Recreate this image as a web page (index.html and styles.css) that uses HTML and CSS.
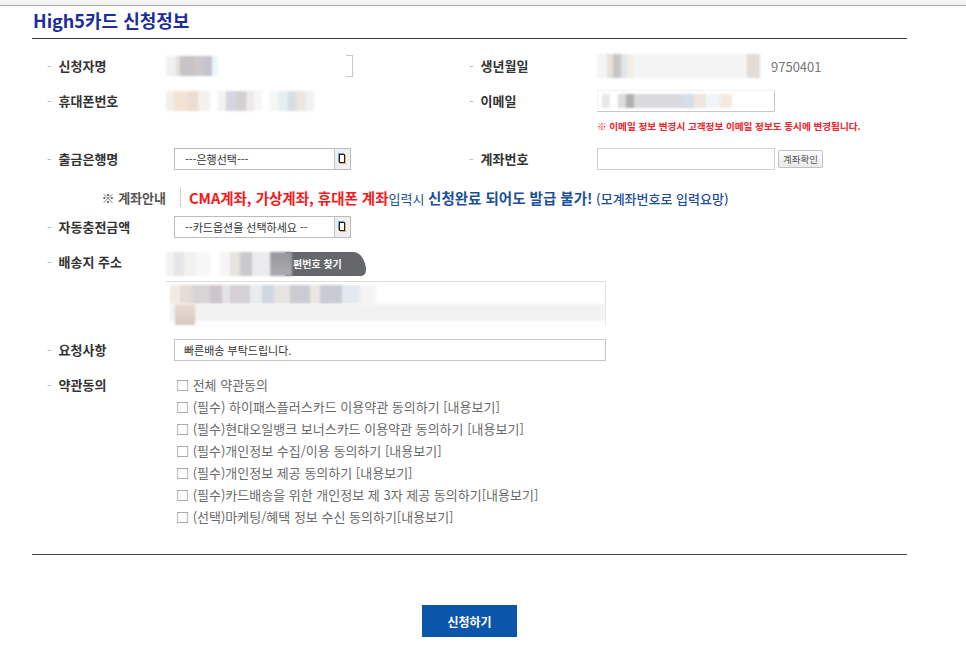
FILE: index.html
```html
<!DOCTYPE html>
<html lang="ko">
<head>
    <meta charset="UTF-8">
    <title>High5카드 신청정보</title>
    <link rel="stylesheet" href="styles.css">
</head>
<body>
    <div class="topbar"></div>
    <div class="wrap">
        <h1 class="title">High5카드 신청정보</h1>
        <div class="line"></div>

        <div class="row r1">
            <div class="cell">
                <span class="label">신청자명</span>
                <div class="field">
                    <span class="mosaic m-name"></span>
                    <span class="bracket"></span>
                </div>
            </div>
            <div class="cell right">
                <span class="label">생년월일</span>
                <div class="field">
                    <span class="mosaic m-birth"></span>
                    <span class="birth">9750401</span>
                </div>
            </div>
        </div>

        <div class="row r2">
            <div class="cell">
                <span class="label">휴대폰번호</span>
                <div class="field">
                    <span class="mosaic m-phone1"></span>
                    <span class="mosaic m-phone2"></span>
                    <span class="mosaic m-phone3"></span>
                </div>
            </div>
            <div class="cell right">
                <span class="label">이메일</span>
                <div class="field">
                    <div class="input email"><span class="mosaic m-email"></span></div>
                </div>
            </div>
        </div>

        <div class="row note-row">
            <div class="cell"></div>
            <div class="cell right">
                <span class="label"></span>
                <p class="note">※ 이메일 정보 변경시 고객정보 이메일 정보도 동시에 변경됩니다.</p>
            </div>
        </div>

        <div class="row r3">
            <div class="cell">
                <span class="label">출금은행명</span>
                <div class="field">
                    <div class="select">---은행선택---<span class="arrow"><i></i></span></div>
                </div>
            </div>
            <div class="cell right">
                <span class="label">계좌번호</span>
                <div class="field">
                    <div class="input account"></div>
                    <button class="btn-check">계좌확인</button>
                </div>
            </div>
        </div>

        <div class="row notice">
            <span class="notice-label">※ 계좌안내</span>
            <span class="sep"></span>
            <span class="notice-text"><b class="red">CMA계좌, 가상계좌, 휴대폰 계좌</b><span class="blue">입력시 </span><b class="blue big">신청완료 되어도 발급 불가!</b><span class="blue paren"> (모계좌번호로 입력요망)</span></span>
        </div>

        <div class="row r5">
            <div class="cell">
                <span class="label">자동충전금액</span>
                <div class="field">
                    <div class="select">--카드옵션을 선택하세요 --<span class="arrow"><i></i></span></div>
                </div>
            </div>
        </div>

        <div class="row r6">
            <div class="cell wide">
                <span class="label">배송지 주소</span>
                <div class="field column">
                    <div class="zip-line">
                        <span class="mosaic m-zip1"></span>
                        <span class="mosaic m-zip2"></span>
                        <span class="mosaic m-zip3"></span>
                        <button class="btn-zip">편번호 찾기</button>
                    </div>
                    <div class="addr-box">
                        <span class="mosaic m-addr1"></span>
                        <span class="addr-band"></span>
                        <span class="mosaic m-addr2"></span>
                    </div>
                </div>
            </div>
        </div>

        <div class="row r7">
            <div class="cell wide">
                <span class="label">요청사항</span>
                <div class="field">
                    <div class="input request">빠른배송 부탁드립니다.</div>
                </div>
            </div>
        </div>

        <div class="row r8">
            <div class="cell wide top">
                <span class="label">약관동의</span>
                <ul class="terms">
                    <li>□ 전체 약관동의</li>
                    <li>□ (필수) 하이패스플러스카드 이용약관 동의하기 [내용보기]</li>
                    <li>□ (필수)현대오일뱅크 보너스카드 이용약관 동의하기 [내용보기]</li>
                    <li>□ (필수)개인정보 수집/이용 동의하기 [내용보기]</li>
                    <li>□ (필수)개인정보 제공 동의하기 [내용보기]</li>
                    <li>□ (필수)카드배송을 위한 개인정보 제 3자 제공 동의하기[내용보기]</li>
                    <li>□ (선택)마케팅/혜택 정보 수신 동의하기[내용보기]</li>
                </ul>
            </div>
        </div>

        <div class="line bottom"></div>

        <div class="actions">
            <button class="btn-submit">신청하기</button>
        </div>
    </div>
</body>
</html>
```

FILE: styles.css
```css
body {
    margin: 0;
    padding: 0;
    background-color: #fff;
    font-family: "Noto Sans CJK KR", "Noto Sans", sans-serif;
    color: #333;
}

.topbar {
    height: 5px;
    background-color: #f4f4f4;
    border-bottom: 1px solid #a8a8a8;
}

.wrap {
    width: 875px;
    margin-left: 32px;
}

.title {
    margin: 0;
    padding: 2px 0 0 1px;
    height: 30px;
    font-size: 18px;
    line-height: 24px;
    font-weight: bold;
    color: #1c2d9a;
}

.line {
    height: 1px;
    background-color: #3a3a3a;
}

.line.bottom {
    margin-top: 26px;
    background-color: #444;
}

/* rows */
.row {
    display: flex;
    align-items: center;
}

.r1 { margin-top: 16px; height: 22px; }
.r2 { margin-top: 13px; height: 22px; }
.note-row { margin-top: 7px; height: 14px; }
.r3 { margin-top: 15px; height: 22px; }
.notice { margin-top: 17px; height: 20px; }
.r5 { margin-top: 9px; height: 22px; }
.r6 { margin-top: 13px; align-items: flex-start; }
.r7 { margin-top: 14px; height: 22px; }
.r8 { margin-top: 13px; align-items: flex-start; }

.cell {
    display: flex;
    align-items: center;
    width: 422px;
    height: 100%;
}

.cell.wide {
    width: 875px;
    align-items: flex-start;
}

.label {
    width: 119px;
    padding-left: 15px;
    font-size: 13px;
    font-weight: bold;
    line-height: 22px;
    color: #333;
    white-space: nowrap;
}

.label:not(:empty)::before {
    content: "-";
    color: #bbb;
    font-weight: normal;
    margin-right: 7px;
}

.right .label {
    width: 128px;
}

.field {
    display: flex;
    align-items: center;
    position: relative;
}

.field.column {
    flex-direction: column;
    align-items: flex-start;
}

/* blurred personal data */
.mosaic {
    display: block;
    filter: blur(1.2px);
}

.m-name {
    width: 52px;
    height: 20px;
    background: linear-gradient(90deg, #f2f0ef 0 10px, #e2dedc 10px 14px, #c6c4c6 14px 28px, #cbc7ca 28px 38px, #c3c4cd 38px 46px, #eef4fd 46px);
}

.bracket {
    display: block;
    width: 6px;
    height: 20px;
    margin-left: 128px;
    border: 1px solid #c8c8c8;
    border-left: none;
}

.m-phone1, .m-phone2, .m-phone3 {
    width: 44px;
    height: 20px;
    margin-right: 8px;
}

.m-phone1 { background: linear-gradient(90deg, #f1eeeb 0 8px, #f5e2d2 8px 22px, #ecdcd1 22px 32px, #f5f0ee 32px); }
.m-phone2 { background: linear-gradient(90deg, #f3f2f2 0 8px, #d5d6e1 8px 18px, #d1d0d3 18px 28px, #ece9e6 28px 36px, #f6f6f6 36px); }
.m-phone3 { background: linear-gradient(90deg, #f4f6f6 0 8px, #e6eef2 8px 18px, #d7dde3 18px 26px, #ece6e2 26px 36px, #f2f1f1 36px); }

.m-birth {
    width: 163px;
    height: 24px;
    background:
        linear-gradient(90deg, transparent 0 10px, #e5e1dd 10px 16px, #c9c6c6 16px 24px, #e2e5e8 24px 30px, #f2ede6 30px 36px, transparent 36px 150px, #e1dcd8 150px 163px),
        #f4f4f4;
}

.birth {
    margin-left: 11px;
    font-size: 13px;
    color: #777;
}

.input {
    box-sizing: border-box;
    height: 22px;
    border: 1px solid #d4d4d4;
    background-color: #fff;
}

.input.email {
    width: 178px;
    border-color: #f2f2f2 #c8c8c8 #c8c8c8 #f2f2f2;
    display: flex;
    align-items: center;
    padding-left: 4px;
}

.m-email {
    width: 140px;
    height: 14px;
    background: linear-gradient(90deg, #e8e8e8 0 8px, #fff 8px 16px, #dcdcdc 16px 24px, #b0b0b0 24px 32px, #dad9dd 32px 80px, #d6dde6 80px 92px, #ede5df 92px 104px, #f1f5fa 104px 118px, #f3eadf 118px 130px, #fff 130px);
}

.note {
    margin: 0;
    font-size: 9.6px;
    font-weight: bold;
    line-height: 14px;
    color: #f2202a;
    white-space: nowrap;
}

.select {
    box-sizing: border-box;
    position: relative;
    width: 177px;
    height: 22px;
    margin-left: 8px;
    padding-left: 10px;
    border: 1px solid #bcbcbc;
    font-size: 11px;
    line-height: 20px;
    color: #333;
    white-space: nowrap;
}

.arrow {
    position: absolute;
    top: 0;
    right: 0;
    width: 15px;
    height: 20px;
    background-color: #efefef;
    border-left: 1px solid #c4c4c4;
}

.arrow i {
    position: absolute;
    left: 4px;
    top: 5px;
    width: 4px;
    height: 7px;
    border: 1px solid #222;
    box-shadow: 1px 1px 0 #e0b070, -1px -1px 0 #7aa0d0;
    background-color: #fff;
}

.input.account {
    width: 178px;
    border-color: #cfcfcf;
}

.btn-check {
    margin-left: 3px;
    height: 18px;
    padding: 0 4px;
    font-family: inherit;
    font-size: 9.5px;
    line-height: 16px;
    color: #555;
    background: linear-gradient(#fdfdfd, #e9e9e9);
    border: 1px solid #c2c2c2;
    border-radius: 2px;
}

/* account notice */
.notice-label {
    width: 134px;
    text-align: right;
    font-size: 13px;
    font-weight: bold;
    color: #555;
}

.sep {
    width: 1px;
    height: 20px;
    margin: 0 8px 0 14px;
    background-color: #d0d0d0;
}

.notice-text {
    white-space: nowrap;
    font-size: 13px;
}

.red {
    color: #f41a1a;
    font-size: 14.5px;
}

.blue {
    color: #1b4f9c;
}

.big {
    font-size: 14.5px;
}

.paren {
    font-weight: 500;
}

/* address */
.zip-line {
    display: flex;
    align-items: center;
    height: 25px;
}

.m-zip1 {
    width: 44px;
    height: 24px;
    background: linear-gradient(90deg, #f3f3f3 0 8px, #e5e5e8 8px 18px, #f2f1ef 18px 30px, #f6f6f6 30px);
}

.m-zip2 {
    width: 50px;
    height: 24px;
    margin-left: 10px;
    background: linear-gradient(90deg, #f5f5f5 0 10px, #e7e3df 10px 20px, #c9c9cd 20px 32px, #ecebed 32px);
}

.m-zip3 {
    width: 22px;
    height: 24px;
    background: linear-gradient(#98989c, #acacb0);
}

.btn-zip {
    margin-left: -7px;
    width: 81px;
    height: 24px;
    padding: 0 0 0 8px;
    text-align: left;
    font-family: inherit;
    font-size: 10px;
    font-weight: bold;
    color: #fff;
    background-color: #66676b;
    border: none;
    border-radius: 0 14px 6px 0 / 0 20px 6px 0;
}

.addr-box {
    box-sizing: border-box;
    position: relative;
    width: 440px;
    height: 44px;
    margin-top: 5px;
    border-top: 1px solid #dcdcdc;
    border-right: 1px solid #e4e4e4;
}

.m-addr1 {
    position: absolute;
    left: 4px;
    top: 3px;
    width: 206px;
    height: 19px;
    background: linear-gradient(90deg, #f0ebe7 0 10px, #e6dcd4 10px 22px, #d8d4d6 22px 40px, #ccc6ca 40px 52px, #e3e3e7 52px 60px, #d4d0d4 60px 80px, #e8ebef 80px 92px, #d0d6e0 92px 104px, #e7e4e0 104px 120px, #cbccd2 120px 140px, #ede6e0 140px 150px, #c8cbd3 150px 172px, #e4e9ef 172px 190px, #f4f4f6 190px);
}

.addr-band {
    position: absolute;
    left: 4px;
    right: 0;
    top: 22px;
    height: 17px;
    background-color: #f2f2f2;
    filter: blur(1px);
}

.m-addr2 {
    position: absolute;
    left: 9px;
    top: 22px;
    width: 20px;
    height: 21px;
    background: linear-gradient(#eadbd2, #d7c7c0);
}

.input.request {
    width: 432px;
    margin-left: 8px;
    padding-left: 9px;
    border-color: #c6c6c6;
    font-size: 11px;
    line-height: 20px;
    color: #333;
}

/* terms */
.terms {
    margin: 0;
    padding: 0 0 0 10px;
    list-style: none;
}

.terms li {
    font-size: 13px;
    line-height: 22px;
    color: #6a6a6a;
    white-space: nowrap;
}

.actions {
    display: flex;
    justify-content: center;
    margin-top: 50px;
}

.btn-submit {
    width: 95px;
    height: 32px;
    font-family: inherit;
    font-size: 12px;
    font-weight: bold;
    color: #fff;
    background-color: #0b55aa;
    border: none;
    cursor: pointer;
}
```
